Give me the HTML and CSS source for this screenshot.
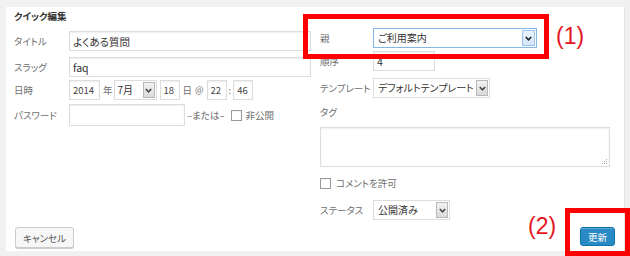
FILE: index.html
```html
<!DOCTYPE html>
<html lang="ja">
<head>
    <meta charset="UTF-8">
    <meta name="viewport" content="width=device-width, initial-scale=1.0">
    <title>クイック編集</title>
    <link rel="stylesheet" href="styles.css">
</head>
<body>
    <div class="panel">
        <div class="columns">
            <div class="col-left">
                <h2 class="title">クイック編集</h2>
                <div class="field row-title">
                    <label>タイトル</label>
                    <input class="text wide" type="text" value="よくある質問">
                </div>
                <div class="field row-slug">
                    <label>スラッグ</label>
                    <input class="text wide" type="text" value="faq">
                </div>
                <div class="field row-date">
                    <label>日時</label>
                    <input class="text num year" type="text" value="2014">
                    <span class="unit">年</span>
                    <div class="select month">
                        <span class="select-text">7月</span>
                        <span class="select-arrow"><svg width="7" height="5" viewBox="0 0 7 5"><polyline points="0.8,1 3.5,3.8 6.2,1" fill="none" stroke="#444" stroke-width="1.5"/></svg></span>
                    </div>
                    <input class="text num day" type="text" value="18">
                    <span class="unit">日</span>
                    <span class="unit at">@</span>
                    <input class="text num day" type="text" value="22">
                    <span class="unit colon">:</span>
                    <input class="text num day" type="text" value="46">
                </div>
                <div class="field row-pass">
                    <label>パスワード</label>
                    <input class="text pass" type="text" value="">
                    <span class="or">–または–</span>
                    <input class="check" type="checkbox">
                    <span class="check-label">非公開</span>
                </div>
            </div>

            <div class="col-right">
                <div class="field row-parent">
                    <label>親</label>
                    <div class="select focused parent">
                        <span class="select-text">ご利用案内</span>
                        <span class="select-arrow"><svg width="7" height="5" viewBox="0 0 7 5"><polyline points="0.8,1 3.5,3.8 6.2,1" fill="none" stroke="#222" stroke-width="1.6"/></svg></span>
                    </div>
                </div>
                <div class="field row-order">
                    <label>順序</label>
                    <input class="text order" type="text" value="4">
                </div>
                <div class="field row-template">
                    <label>テンプレート</label>
                    <div class="select template">
                        <span class="select-text">デフォルトテンプレート</span>
                        <span class="select-arrow"><svg width="7" height="5" viewBox="0 0 7 5"><polyline points="0.8,1 3.5,3.8 6.2,1" fill="none" stroke="#444" stroke-width="1.5"/></svg></span>
                    </div>
                </div>
                <div class="tag-label">タグ</div>
                <div class="textarea">
                    <svg class="grip" width="7" height="7" viewBox="0 0 7 7">
                        <rect x="5" y="1" width="1" height="1" fill="#aaa"/>
                        <rect x="3" y="3" width="1" height="1" fill="#aaa"/>
                        <rect x="5" y="3" width="1" height="1" fill="#aaa"/>
                        <rect x="1" y="5" width="1" height="1" fill="#aaa"/>
                        <rect x="3" y="5" width="1" height="1" fill="#aaa"/>
                        <rect x="5" y="5" width="1" height="1" fill="#aaa"/>
                    </svg>
                </div>
                <div class="comment-row">
                    <input class="check" type="checkbox">
                    <span class="check-label">コメントを許可</span>
                </div>
                <div class="field row-status">
                    <label>ステータス</label>
                    <div class="select status">
                        <span class="select-text">公開済み</span>
                        <span class="select-arrow"><svg width="7" height="5" viewBox="0 0 7 5"><polyline points="0.8,1 3.5,3.8 6.2,1" fill="none" stroke="#444" stroke-width="1.5"/></svg></span>
                    </div>
                </div>
            </div>
        </div>

        <div class="actions">
            <button class="button cancel">キャンセル</button>
            <button class="button primary">更新</button>
        </div>
    </div>

    <div class="mark mark-1"></div>
    <div class="mark-label label-1">(1)</div>
    <div class="mark mark-2"></div>
    <div class="mark-label label-2">(2)</div>
</body>
</html>
```

FILE: styles.css
```css
body {
    margin: 0;
    background: #f1f1f1;
    font-family: "Noto Sans CJK JP", sans-serif;
    font-feature-settings: "palt";
    color: #6e6e6e;
    font-size: 9.5px;
    overflow: hidden;
}
.panel {
    margin: 7px 5px 0 6px;
    height: 244px;
    box-sizing: border-box;
    background: #fff;
    border-right: 1px solid #e2e2e2;
    padding: 0 9px 3px 8px;
    display: flex;
    flex-direction: column;
}
.columns {
    display: flex;
}
.col-left {
    width: 297px;
    flex: none;
}
.col-right {
    width: 290px;
    flex: none;
    margin-left: 9px;
    padding-top: 21px;
}
.title {
    margin: 0 0 7px 0;
    padding-top: 1px;
    font-size: 9.5px;
    line-height: 16px;
    font-weight: bold;
    color: #333;
}
.field {
    display: flex;
    align-items: center;
    height: 20px;
}
.field label {
    width: 55px;
    flex: none;
    line-height: 14px;
    white-space: nowrap;
}
.col-right .field label {
    width: 53px;
}
.row-title { margin-bottom: 6px; }
.row-slug { margin-bottom: 3px; }
.row-date { margin-bottom: 4px; }
.row-pass { height: 22px; }
.row-parent { margin-bottom: 3px; }
.row-order { margin-bottom: 7px; }
.row-template { margin-bottom: 7px; }

.text {
    box-sizing: border-box;
    height: 20px;
    margin: 0;
    border: 1px solid #ddd;
    box-shadow: inset 0 1px 2px rgba(0, 0, 0, 0.07);
    padding: 0 3px;
    font-family: "Noto Sans CJK JP", sans-serif;
    font-feature-settings: "palt";
    font-size: 10.5px;
    color: #333;
    outline: none;
}
.wide { width: 242px; }
.num { font-size: 9.5px; padding: 0 3px; color: #444; }
.year { width: 31px; }
.day { width: 20px; }
.pass { width: 116px; height: 22px; }
.order { width: 62px; }

.unit {
    line-height: 14px;
}
.row-date .unit { margin: 0 1px 0 3px; }
.row-date .at { margin: 0 3px 0 2px; font-size: 9px; }
.row-date .colon { margin: 0 2px 0 2px; }
.row-date .month { margin-right: 3px; }

.select {
    box-sizing: border-box;
    height: 20px;
    display: flex;
    align-items: stretch;
    border: 1px solid #ddd;
    background: #fff;
}
.select-text {
    flex: 1;
    padding-left: 4px;
    font-size: 10px;
    line-height: 18px;
    color: #333;
    white-space: nowrap;
    overflow: hidden;
}
.select-arrow {
    box-sizing: border-box;
    width: 12px;
    flex: none;
    margin: 1px 1px 1px 0;
    border: 1px solid #b8b8b8;
    background: linear-gradient(#f2f2f2, #dadada);
    display: flex;
    align-items: center;
    justify-content: center;
}
.month { width: 43px; }
.month .select-text { padding-left: 3px; }
.parent { width: 164px; }
.template { width: 117px; }
.status { width: 77px; }
.focused {
    border-color: #84b6e8;
}
.focused .select-arrow {
    border-color: #9cc3ec;
    background: linear-gradient(#e8f2fd, #d2e6fb);
    width: 13px;
}

.or {
    margin-left: 2px;
    line-height: 14px;
}
.check {
    appearance: none;
    -webkit-appearance: none;
    box-sizing: border-box;
    width: 11px;
    height: 11px;
    margin: 0 4px 0 6px;
    border: 1px solid #9a9a9a;
    background: #fff;
    box-shadow: inset 0 1px 1px rgba(0, 0, 0, 0.05);
}
.check-label {
    line-height: 14px;
}

.tag-label {
    line-height: 14px;
    margin-bottom: 8px;
}
.textarea {
    position: relative;
    box-sizing: border-box;
    width: 290px;
    height: 40px;
    border: 1px solid #ddd;
    box-shadow: inset 0 1px 2px rgba(0, 0, 0, 0.07);
    margin-bottom: 9px;
}
.grip {
    position: absolute;
    right: 1px;
    bottom: 1px;
}
.comment-row {
    display: flex;
    align-items: center;
    height: 14px;
    margin-bottom: 10px;
}
.comment-row .check { margin-left: 0; margin-right: 5px; }

.actions {
    margin-top: auto;
    display: flex;
    justify-content: space-between;
    align-items: flex-start;
    height: 21px;
    padding-left: 1px;
}
.button {
    box-sizing: border-box;
    margin: 0;
    border-radius: 3px;
    font-family: "Noto Sans CJK JP", sans-serif;
    font-feature-settings: "palt";
    font-size: 9.5px;
    line-height: 14px;
    padding: 0;
    white-space: nowrap;
    cursor: pointer;
}
.cancel {
    height: 21px;
    width: 59px;
    border: 1px solid #ccc;
    background: #f7f7f7;
    color: #555;
    box-shadow: 0 1px 0 #ccc;
}
.primary {
    height: 19px;
    width: 35px;
    border: 1px solid #0d74ab;
    background: #2a8ac4;
    color: #fff;
    box-shadow: inset 0 1px 0 #5aa9d8;
}

.mark {
    position: absolute;
    box-sizing: border-box;
    border: 5px solid #ff0000;
}
.mark-1 {
    left: 303px;
    top: 14px;
    width: 246px;
    height: 45px;
}
.mark-2 {
    left: 565px;
    top: 208px;
    width: 65px;
    height: 48px;
}
.mark-label {
    position: absolute;
    font-family: "Liberation Sans", Arial, sans-serif;
    font-size: 23px;
    line-height: 23px;
    color: #e5131d;
}
.label-1 { left: 556px; top: 25px; }
.label-2 { left: 528px; top: 215px; }
```
